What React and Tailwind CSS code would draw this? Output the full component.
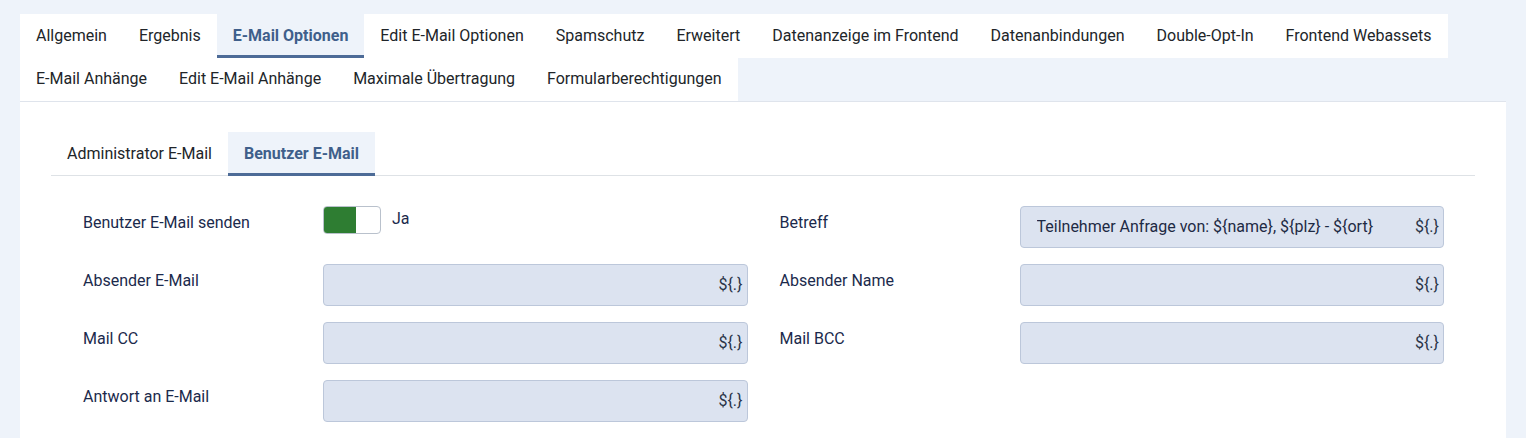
const mainTabs = [
    "Allgemein",
    "Ergebnis",
    "E-Mail Optionen",
    "Edit E-Mail Optionen",
    "Spamschutz",
    "Erweitert",
    "Datenanzeige im Frontend",
    "Datenanbindungen",
    "Double-Opt-In",
    "Frontend Webassets",
    "E-Mail Anhänge",
    "Edit E-Mail Anhänge",
    "Maximale Übertragung",
    "Formularberechtigungen",
];

function Field({ label, value = "" }) {
    return (
        <div className="flex">
            <div className="w-[240px] shrink-0 pt-[5px] leading-[24px] text-[#1b2a4c]">{label}</div>
            <div className="flex h-[42px] flex-1 items-center rounded-[4px] border border-[#bcc7da] bg-[#dce3f0] pl-[16px] pr-[4px] text-[#1e2a44]">
                <span className="flex-1 truncate">{value}</span>
                <span className="text-[#2a3448]">{"${.}"}</span>
            </div>
        </div>
    );
}

function SwitchField({ label }) {
    return (
        <div className="flex h-[42px]">
            <div className="w-[240px] shrink-0 pt-[5px] leading-[24px] text-[#1b2a4c]">{label}</div>
            <div className="flex h-[28px] items-center gap-[11px]">
                <div className="flex h-[28px] w-[58px] overflow-hidden rounded-[4px] border border-[#b9c1cc] bg-white">
                    <div className="w-[32px] bg-[#2e7d32]" />
                </div>
                <span className="-mt-[3px] text-[#1b2a4c]">Ja</span>
            </div>
        </div>
    );
}

export default function App() {
    return (
        <div
            className="min-h-[438px] bg-[#eef3fa] px-[20px] pt-[14px] text-[16px]"
            style={{ fontFamily: "Roboto, 'Liberation Sans', sans-serif" }}
        >
            <div className="flex flex-wrap">
                {mainTabs.map((t) => (
                    <div
                        key={t}
                        className={
                            t === "E-Mail Optionen"
                                ? "flex h-[43.5px] items-center border-b-[3px] border-[#4d6b97] bg-[#eef3fa] px-4 pt-[3px] font-bold text-[#3f5f8b]"
                                : "flex h-[43.5px] items-center bg-white px-4 text-[#212529]"
                        }
                    >
                        {t}
                    </div>
                ))}
            </div>

            <div className="border-t border-[#dfe4ec] bg-white px-[31px] pt-[30px] pb-[20px]">
                <div className="flex border-b border-[#dee2e6]">
                    <div className="flex h-[43px] items-center px-4 text-[#212529]">Administrator E-Mail</div>
                    <div className="-mb-px flex h-[44px] items-center border-b-[3px] border-[#4d6b97] bg-[#eef3fa] px-4 pt-[3px] font-bold text-[#3f5f8b]">
                        Benutzer E-Mail
                    </div>
                </div>

                <div className="grid grid-cols-2 gap-x-[32px] gap-y-[16px] pl-8 pr-[31px] pt-[30px]">
                    <SwitchField label="Benutzer E-Mail senden" />
                    <Field label="Betreff" value="Teilnehmer Anfrage von: ${name}, ${plz} - ${ort}" />
                    <Field label="Absender E-Mail" />
                    <Field label="Absender Name" />
                    <Field label="Mail CC" />
                    <Field label="Mail BCC" />
                    <Field label="Antwort an E-Mail" />
                </div>
            </div>
        </div>
    );
}
